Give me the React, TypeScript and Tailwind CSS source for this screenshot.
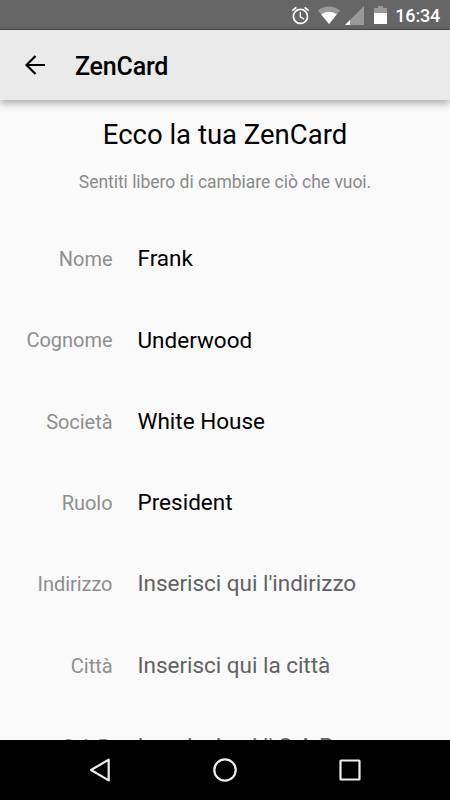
import React from "react";
import clsx from "clsx";

const FIELDS = [
  { id: 1, label: "Nome", value: "Frank" },
  { id: 2, label: "Cognome", value: "Underwood" },
  { id: 3, label: "Società", value: "White House" },
  { id: 4, label: "Ruolo", value: "President" },
  { id: 5, label: "Indirizzo", placeholder: "Inserisci qui l'indirizzo" },
  { id: 6, label: "Città", placeholder: "Inserisci qui la città" },
  { id: 7, label: "C.A.P.", placeholder: "Inserisci qui l' C.A.P." },
];

const StatusBar = () => {
  return (
    <div className="flex h-[30px] shrink-0 items-center justify-end border-b border-[#4c4c4c] bg-[#666666] pt-px pr-[10px] text-white">
      <svg width="21" height="21" viewBox="0 0 24 24" fill="currentColor">
        <path d="M22 5.72l-4.6-3.86-1.29 1.53 4.6 3.86L22 5.72zM7.88 3.39L6.6 1.86 2 5.71l1.29 1.53 4.59-3.85zM12.5 8H11v6l4.75 2.85.75-1.23-4-2.37V8zM12 4c-4.97 0-9 4.03-9 9s4.02 9 9 9a9 9 0 0 0 0-18zm0 16c-3.87 0-7-3.13-7-7s3.13-7 7-7 7 3.13 7 7-3.13 7-7 7z" />
      </svg>
      <svg width="22" height="18" viewBox="0 0 22 18" className="ml-[7px]">
        <path d="M0 4.5C6.2-.7 15.8-.7 22 4.5L11 18z" fill="#999999" />
        <path d="M3.2 8.4c4.5-3.7 11.1-3.7 15.6 0L11 18z" fill="white" />
      </svg>
      <svg width="19" height="19" viewBox="0 0 19 19" className="ml-[5px]">
        <path d="M19 0v19H0z" fill="#999999" />
        <path d="M5 14v5H0z" fill="white" />
      </svg>
      <svg width="13" height="18" viewBox="0 0 13 18" className="ml-[10px]">
        <path d="M4 0h5v2h4v6H0V2h4z" fill="#999999" />
        <path d="M0 7h13v11H0z" fill="white" />
      </svg>
      <span className="ml-[8px] w-[45px] pt-0.5 text-right text-[18px] leading-none font-medium tracking-[-0.2px]">
        16:34
      </span>
    </div>
  );
};

const Header = () => {
  return (
    <header className="relative z-10 flex h-[70px] shrink-0 items-center bg-[#eaeaea] pl-[25px] shadow-[0_3px_8px_rgba(0,0,0,0.35)]">
      <svg
        width="20"
        height="20"
        viewBox="0 0 20 20"
        fill="none"
        stroke="black"
        strokeWidth="2.2"
      >
        <path d="M20 10H2M10.5 1L1.5 10l9 9" />
      </svg>
      <h1 className="ml-[30px] pt-0.5 text-[25px] leading-none font-medium tracking-[-0.2px]">
        ZenCard
      </h1>
    </header>
  );
};

const NavBar = () => {
  return (
    <nav className="h-[60px] shrink-0 bg-black">
      <div className="flex h-full items-center justify-between px-[87px]">
        <svg
          width="26"
          height="26"
          viewBox="0 0 26 26"
          fill="none"
          stroke="#eeeeee"
          strokeWidth="2.2"
          strokeLinejoin="round"
        >
          <path d="M21.7 2.6v20.8L4.1 13z" />
        </svg>
        <svg
          width="26"
          height="26"
          viewBox="0 0 26 26"
          fill="none"
          stroke="#eeeeee"
          strokeWidth="2.2"
        >
          <circle cx="13" cy="13" r="10.7" />
        </svg>
        <svg
          width="26"
          height="26"
          viewBox="0 0 26 26"
          fill="none"
          stroke="#eeeeee"
          strokeWidth="2.2"
          strokeLinejoin="round"
        >
          <rect x="3.5" y="3.5" width="19" height="19" rx="0.5" />
        </svg>
      </div>
    </nav>
  );
};

const App = () => {
  return (
    <div className="flex h-[800px] w-[450px] flex-col overflow-hidden bg-[#fafafa] font-['Roboto',sans-serif] text-black">
      <StatusBar />
      <Header />
      <main className="min-h-0 flex-1 overflow-hidden">
        <h2 className="pt-[19px] text-center text-[27.5px] leading-8">
          Ecco la tua ZenCard
        </h2>
        <p className="mt-[19px] text-center text-[17.5px] leading-6 tracking-[-0.04px] text-[#8a8a8a]">
          Sentiti libero di cambiare ciò che vuoi.
        </p>
        <div className="mt-[24.5px]">
          {FIELDS.map((field) => (
            <div
              key={field.id}
              className="flex h-[81.3px] items-center whitespace-nowrap"
            >
              <span className="w-[112.5px] text-right text-[20px] tracking-[-0.04px] text-[#8f8f8f]">
                {field.label}
              </span>
              <span
                className={clsx(
                  "ml-[25px] text-[22.5px]",
                  field.value
                    ? "text-black"
                    : "tracking-[-0.03px] text-[#626262]"
                )}
              >
                {field.value || field.placeholder}
              </span>
            </div>
          ))}
        </div>
      </main>
      <NavBar />
    </div>
  );
};

export default App;
